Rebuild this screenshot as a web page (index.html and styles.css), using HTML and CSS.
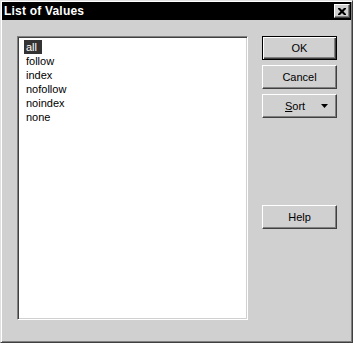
FILE: index.html
```html
<!DOCTYPE html>
<html lang="en">
<head>
  <meta charset="UTF-8" />
  <title>List of Values</title>
  <link rel="stylesheet" href="styles.css">
</head>
<body>
  <div class="window">
    <div class="titlebar">
      <span class="title">List of Values</span>
      <button class="close" aria-label="Close">
        <svg viewBox="0 0 8 7" width="8" height="7"><path d="M0 0h2l2 2 2-2h2v1l-2.5 2.5L8 6v1H6L4 5 2 7H0V6l2.5-2.5L0 1z"/></svg>
      </button>
    </div>

    <div class="content">
      <div class="listbox">
        <ul class="values">
          <li class="value selected"><span>all</span></li>
          <li class="value"><span>follow</span></li>
          <li class="value"><span>index</span></li>
          <li class="value"><span>nofollow</span></li>
          <li class="value"><span>noindex</span></li>
          <li class="value"><span>none</span></li>
        </ul>
      </div>

      <div class="buttons">
        <button class="btn default">OK</button>
        <button class="btn">Cancel</button>
        <button class="btn sort">
          <span class="label"><u>S</u>ort</span>
          <svg viewBox="0 0 7 4" width="7" height="4"><path d="M0 0h7L3.5 4z"/></svg>
        </button>
        <button class="btn help">Help</button>
      </div>
    </div>
  </div>
</body>
</html>
```

FILE: styles.css
```css
body {
  margin: 0;
  background: #d0d0d0;
  font-family: 'Liberation Sans', Arial, sans-serif;
  font-size: 11px;
  color: black;
}

.window {
  width: 353px;
  height: 343px;
  box-sizing: border-box;
  background: #d0d0d0;
  border: 1px solid;
  border-color: #e0e0e0 #404040 #404040 #e0e0e0;
  box-shadow: inset 1px 1px #fff, inset -1px -1px #808080;
  padding: 1px;
  display: flex;
  flex-direction: column;
}

/* Title bar */
.titlebar {
  height: 18px;
  background: black;
  color: white;
  display: flex;
  align-items: center;
  justify-content: space-between;
  padding: 0 1px 0 2px;
}

.title {
  font-weight: bold;
  font-size: 12px;
  letter-spacing: 0.2px;
}

.close {
  width: 16px;
  height: 14px;
  padding: 0;
  margin: 0;
  background: #d0d0d0;
  border: 1px solid;
  border-color: #fff #404040 #404040 #fff;
  box-shadow: inset -1px -1px #808080;
  display: flex;
  align-items: center;
  justify-content: center;
}

.close svg {
  fill: black;
}

/* Body */
.content {
  flex: 1;
  display: flex;
  gap: 14px;
  padding: 16px 0 0 15px;
}

.listbox {
  width: 231px;
  height: 284px;
  box-sizing: border-box;
  background: white;
  border: 1px solid;
  border-color: #808080 #fff #fff #808080;
  box-shadow: inset 1px 1px #404040, inset -1px -1px #d0d0d0;
  padding: 3px 4px 3px 6px;
}

.values {
  list-style: none;
  margin: 0;
  padding: 0;
}

.value {
  height: 14px;
  line-height: 14px;
}

.value span {
  padding: 0 2px;
}

.value.selected span {
  background: #333;
  color: white;
  padding: 1px 5px 1px 2px;
}

/* Buttons */
.buttons {
  display: flex;
  flex-direction: column;
  gap: 5px;
  width: 75px;
}

.btn {
  height: 24px;
  width: 75px;
  margin: 0;
  padding: 0;
  font-family: 'Liberation Sans', Arial, sans-serif;
  font-size: 11px;
  color: black;
  background: #d0d0d0;
  border: 1px solid;
  border-color: #fff #404040 #404040 #fff;
  box-shadow: inset -1px -1px #808080;
}

.btn.default {
  border-color: black;
  box-shadow: inset 1px 1px #fff, inset -1px -1px #404040, inset -2px -2px #808080;
}

.btn.sort {
  display: flex;
  align-items: center;
  justify-content: space-between;
  padding: 0 8px 0 22px;
}

.btn.sort svg {
  fill: black;
}

.btn.help {
  margin-top: 82px;
}
```
